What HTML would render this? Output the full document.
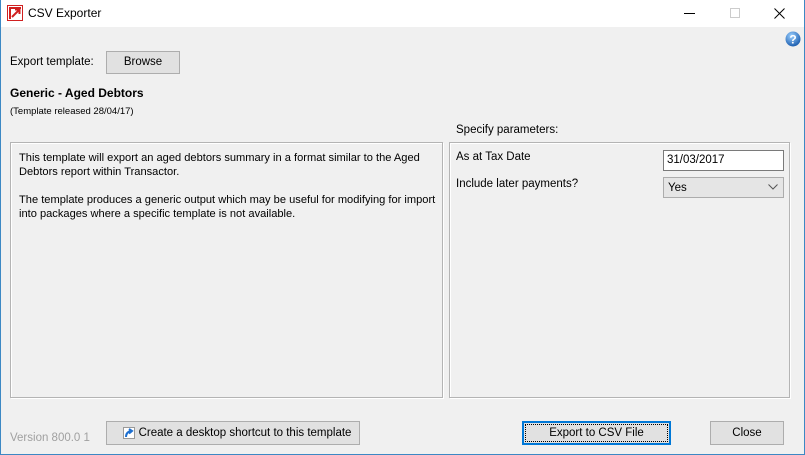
<!DOCTYPE html>
<html><head><style>
*{margin:0;padding:0;box-sizing:border-box}
body{width:805px;height:455px;background:#f0f0f0;font-family:"Liberation Sans",sans-serif;font-size:11.5px;color:#000;position:relative;overflow:hidden}
.a{position:absolute;white-space:nowrap}
.win{position:absolute;left:0;top:0;width:805px;height:455px;border:1px solid #3c88c4;border-top:none}
.title{position:absolute;left:0;top:0;width:805px;height:27px;background:#fff}
.btn{position:absolute;background:#e1e1e1;border:1px solid #adadad;text-align:center;line-height:20px}
.panel{position:absolute;border:1px solid #b4b4b4;box-shadow:inset 1px 1px 0 #fff,1px 1px 0 #fff}
</style></head><body>
<div class="title"></div>
<div class="win"></div>
<svg class="a" style="left:7px;top:5px" width="16" height="16"><rect x="0.5" y="0.5" width="15" height="15" fill="#fff" stroke="#d02020"/><rect x="2" y="2" width="12" height="12" fill="#d02020"/><rect x="4" y="4" width="10" height="10" fill="#fff"/><path d="M5 12 L12 5 M8 4.5 H12.5 V9" stroke="#d02020" stroke-width="2" fill="none"/></svg>
<div class="a" style="left:28px;top:6px;font-size:12px">CSV Exporter</div>
<div class="a" style="left:684px;top:13px;width:11px;height:1px;background:#000"></div>
<div class="a" style="left:730px;top:8px;width:10px;height:10px;border:1px solid #ccc"></div>
<svg class="a" style="left:774px;top:8px" width="11" height="11"><path d="M0.5 0.5L10.5 10.5M10.5 0.5L0.5 10.5" stroke="#000"/></svg>
<svg class="a" style="left:785px;top:31px" width="16" height="16"><defs><radialGradient id="g" cx="0.4" cy="0.3" r="0.7"><stop offset="0" stop-color="#9cd0ff"/><stop offset="1" stop-color="#1d5fb0"/></radialGradient></defs><circle cx="8" cy="8" r="7.5" fill="url(#g)"/><text x="8" y="12.5" text-anchor="middle" font-family="Liberation Sans" font-weight="bold" font-size="12" fill="#fff">?</text></svg>
<div class="a" style="left:10px;top:56px">Export template:</div>
<div class="btn" style="left:106px;top:51px;width:74px;height:23px">Browse</div>
<div class="a" style="left:10px;top:86px;font-weight:bold;font-size:12px">Generic - Aged Debtors</div>
<div class="a" style="left:10px;top:106px;font-size:9.5px">(Template released 28/04/17)</div>
<div class="a" style="left:456px;top:124px">Specify parameters:</div>
<div class="panel" style="left:10px;top:142px;width:433px;height:256px"></div>
<div class="panel" style="left:449px;top:142px;width:341px;height:256px"></div>
<div class="a" style="left:19px;top:151px;line-height:14px;font-size:11.1px">This template will export an aged debtors summary in a format similar to the Aged<br>Debtors report within Transactor.<br><br>The template produces a generic output which may be useful for modifying for import<br>into packages where a specific template is not available.</div>
<div class="a" style="left:456px;top:151px">As at Tax Date</div>
<div class="a" style="left:456px;top:178px">Include later payments?</div>
<div class="a" style="left:663px;top:150px;width:121px;height:21px;background:#fff;border:1px solid #7a7a7a;padding:3px 0 0 3px">31/03/2017</div>
<div class="a" style="left:663px;top:177px;width:121px;height:21px;background:#e5e5e5;border:1px solid #acacac;padding:4px 0 0 4px">Yes</div>
<svg class="a" style="left:768px;top:184px" width="10" height="6"><path d="M0.5 0.5L5 5L9.5 0.5" stroke="#555" fill="none"/></svg>
<div class="a" style="left:10px;top:432px;color:#a0a0a0">Version 800.0 1</div>
<div class="btn" style="left:106px;top:421px;width:254px;height:24px;line-height:23px;padding-left:24px">Create a desktop shortcut to this template</div>
<svg class="a" style="left:123px;top:427px" width="12" height="12"><rect x="0.5" y="0.5" width="11" height="11" fill="#fff" stroke="#999"/><path d="M3 10 Q3 5 8 4 M6 2 L9 4 L6 6.5" stroke="#1d6fd0" stroke-width="2" fill="none"/></svg>
<div class="btn" style="left:522px;top:421px;width:149px;height:24px;line-height:21px;border:2px solid #0078d7;outline:1px dotted #000;outline-offset:-4px">Export to CSV File</div>
<div class="btn" style="left:710px;top:421px;width:74px;height:24px;line-height:23px">Close</div>
</body></html>
